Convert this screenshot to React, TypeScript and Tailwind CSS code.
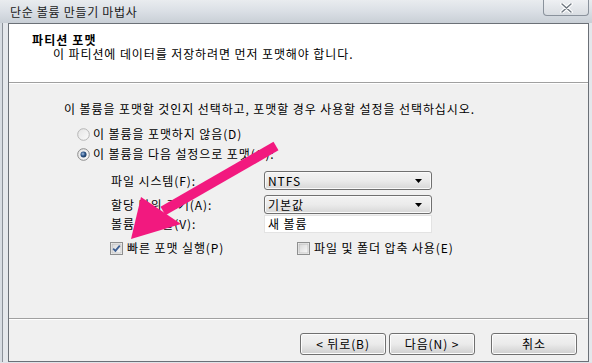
import React from "react";

const font = { fontFamily: '"Noto Sans CJK KR", "Noto Sans", sans-serif' };

function Radio({ checked }: { checked?: boolean }) {
  return (
    <svg width="13" height="13" viewBox="0 0 13 13" className="shrink-0">
      <defs>
        <linearGradient id={checked ? "rg1" : "rg0"} x1="0" y1="0" x2="1" y2="1">
          <stop offset="0" stopColor="#e4e4e4" />
          <stop offset="1" stopColor="#fbfbfb" />
        </linearGradient>
        <radialGradient id="dot" cx="0.4" cy="0.4" r="0.7">
          <stop offset="0" stopColor="#a9c3e3" />
          <stop offset="0.5" stopColor="#2e5689" />
          <stop offset="1" stopColor="#16304f" />
        </radialGradient>
      </defs>
      <circle cx="6.5" cy="6.5" r="5.8" fill={`url(#${checked ? "rg1" : "rg0"})`} stroke={checked ? "#8a8a8a" : "#b5b5b5"} strokeWidth="1" />
      {checked && <circle cx="6.5" cy="6.5" r="3" fill="url(#dot)" />}
    </svg>
  );
}

function Check({ checked }: { checked?: boolean }) {
  return (
    <svg width="13" height="13" viewBox="0 0 13 13" className="shrink-0">
      <defs>
        <linearGradient id="cbg" x1="0" y1="0" x2="1" y2="1">
          <stop offset="0" stopColor="#d6d6d6" />
          <stop offset="1" stopColor="#fafafa" />
        </linearGradient>
      </defs>
      <rect x="0.5" y="0.5" width="12" height="12" fill="#f4f4f4" stroke="#8e8f8f" />
      <rect x="2" y="2" width="9" height="9" fill="url(#cbg)" stroke="#b0b0b0" strokeWidth="0.6" />
      {checked && (
        <path d="M3.2 6.6 L5.4 8.8 L9.8 3.6" fill="none" stroke="#3d5f93" strokeWidth="1.8" />
      )}
    </svg>
  );
}

function Combo({ value }: { value: string }) {
  return (
    <div className="w-[168px] h-[19px] rounded-[3px] border border-[#707070] bg-gradient-to-b from-[#f3f3f3] via-[#ebebeb] to-[#d7d7d7] flex items-center pl-[3px] pr-[9px] justify-between shadow-[inset_0_0_0_1px_#fafafa]">
      <span className="text-[12px] leading-[14px] text-black">{value}</span>
      <svg width="7" height="4" viewBox="0 0 7 4">
        <path d="M0 0 H7 L3.5 4 Z" fill="#000" />
      </svg>
    </div>
  );
}

function Btn({ children }: { children: React.ReactNode }) {
  return (
    <div className="w-[86px] h-[22px] rounded-[3px] border border-[#707070] bg-gradient-to-b from-[#f2f2f2] via-[#ebebeb] to-[#cfcfcf] flex items-center justify-center text-[12px] leading-[14px] text-black shadow-[inset_0_0_0_1px_#fcfcfc]">
      {children}
    </div>
  );
}

export default function App() {
  return (
    <div className="w-[592px] h-[363px] relative overflow-hidden flex flex-col bg-gradient-to-b from-[#dfe4ea] to-[#cbd3dc] text-black tracking-[0.9px]" style={font}>
      {/* title bar */}
      <div className="h-[23px] flex items-center pl-[10px] relative bg-gradient-to-b from-[#e9ecef] via-[#dadfe5] to-[#c9cfd6]">
        <span className="text-[12px] leading-[14px] text-[#1a1a1a] tracking-[0.7px]">단순 볼륨 만들기 마법사</span>
        <div className="absolute right-[3px] top-0 w-[46px] h-[16px] rounded-b-[4px] border border-t-0 border-[#8a929c] bg-gradient-to-b from-[#eef0f3] to-[#d9dde2] flex items-center justify-center">
          <svg width="13" height="10" viewBox="0 0 13 10">
            <path d="M2 1 L11 9 M11 1 L2 9" stroke="#ffffff" strokeWidth="3.6" strokeLinecap="round" />
            <path d="M2 1 L11 9 M11 1 L2 9" stroke="#6f7780" strokeWidth="1.4" strokeLinecap="round" />
          </svg>
        </div>
      </div>
      <div className="flex flex-1">
        {/* left frame */}
        <div className="w-[8px] flex">
          <div className="w-[2px] bg-[#d7dce2]" />
          <div className="w-[1px] bg-[#8b9199]" />
          <div className="flex-1 bg-[#e4e7eb]" />
        </div>
        {/* client */}
        <div className="w-[581px] border border-[#6b7077] bg-[#f0f0f0] flex flex-col">
          <div className="h-[58px] bg-white pt-[9px] pl-[23px] flex flex-col">
            <div className="text-[12px] leading-[14px] font-bold tracking-[1.1px]">파티션 포맷</div>
            <div className="text-[12px] leading-[14px] pl-[21px]">이 파티션에 데이터를 저장하려면 먼저 포맷해야 합니다.</div>
          </div>
          <div className="h-[1px] bg-[#a0a0a0]" />
          <div className="h-[1px] bg-white" />
          <div className="h-[234px] pl-[55px] flex flex-col">
            <div className="mt-[17px] h-[16px] flex items-center text-[12px]">이 볼륨을 포맷할 것인지 선택하고, 포맷할 경우 사용할 설정을 선택하십시오.</div>
            <div className="mt-[9px] h-[16px] flex items-center gap-[3px] pl-[13px] text-[12px]">
              <Radio />
              <span>이 볼륨을 포맷하지 않음(D)</span>
            </div>
            <div className="mt-[4px] h-[16px] flex items-center gap-[3px] pl-[13px] text-[12px]">
              <Radio checked />
              <span>이 볼륨을 다음 설정으로 포맷(O):</span>
            </div>
            <div className="mt-[9px] flex items-center pl-[47px] text-[12px]">
              <span className="w-[153px]">파일 시스템(F):</span>
              <Combo value="NTFS" />
            </div>
            <div className="mt-[5px] flex items-center pl-[47px] text-[12px]">
              <span className="w-[153px]">할당 단위 크기(A):</span>
              <Combo value="기본값" />
            </div>
            <div className="mt-[1px] flex items-center pl-[47px] text-[12px]">
              <span className="w-[153px]">볼륨 레이블(V):</span>
              <div className="w-[168px] h-[18px] bg-white border border-[#e3e3e3] flex items-center pl-[3px]">새 볼륨</div>
            </div>
            <div className="mt-[7px] h-[16px] flex items-center pl-[46px] text-[12px]">
              <div className="w-[187px] flex items-center gap-[4px]">
                <Check checked />
                <span>빠른 포맷 실행(P)</span>
              </div>
              <div className="flex items-center gap-[4px]">
                <Check />
                <span>파일 및 폴더 압축 사용(E)</span>
              </div>
            </div>
          </div>
          <div className="h-[1px] bg-[#a0a0a0]" />
          <div className="h-[1px] bg-white" />
          <div className="flex-1 flex items-start justify-end pr-[11px] pt-[13px]">
            <div className="flex gap-[3px]">
              <Btn>&lt; 뒤로(B)</Btn>
              <Btn>다음(N) &gt;</Btn>
            </div>
            <div className="ml-[16px]">
              <Btn>취소</Btn>
            </div>
          </div>
        </div>
        <div className="flex-1 bg-[#e4e7eb]" />
      </div>
      <div className="h-[1px] bg-[#dfe3e8]" />

      {/* pink arrow overlay */}
      <svg className="absolute left-0 top-0 pointer-events-none" width="592" height="363" viewBox="0 0 592 363">
        <line x1="276" y1="146" x2="163" y2="211" stroke="#f2197f" strokeWidth="10" />
        <polygon points="131,239 141,197 181,224" fill="#f2197f" />
      </svg>
    </div>
  );
}
